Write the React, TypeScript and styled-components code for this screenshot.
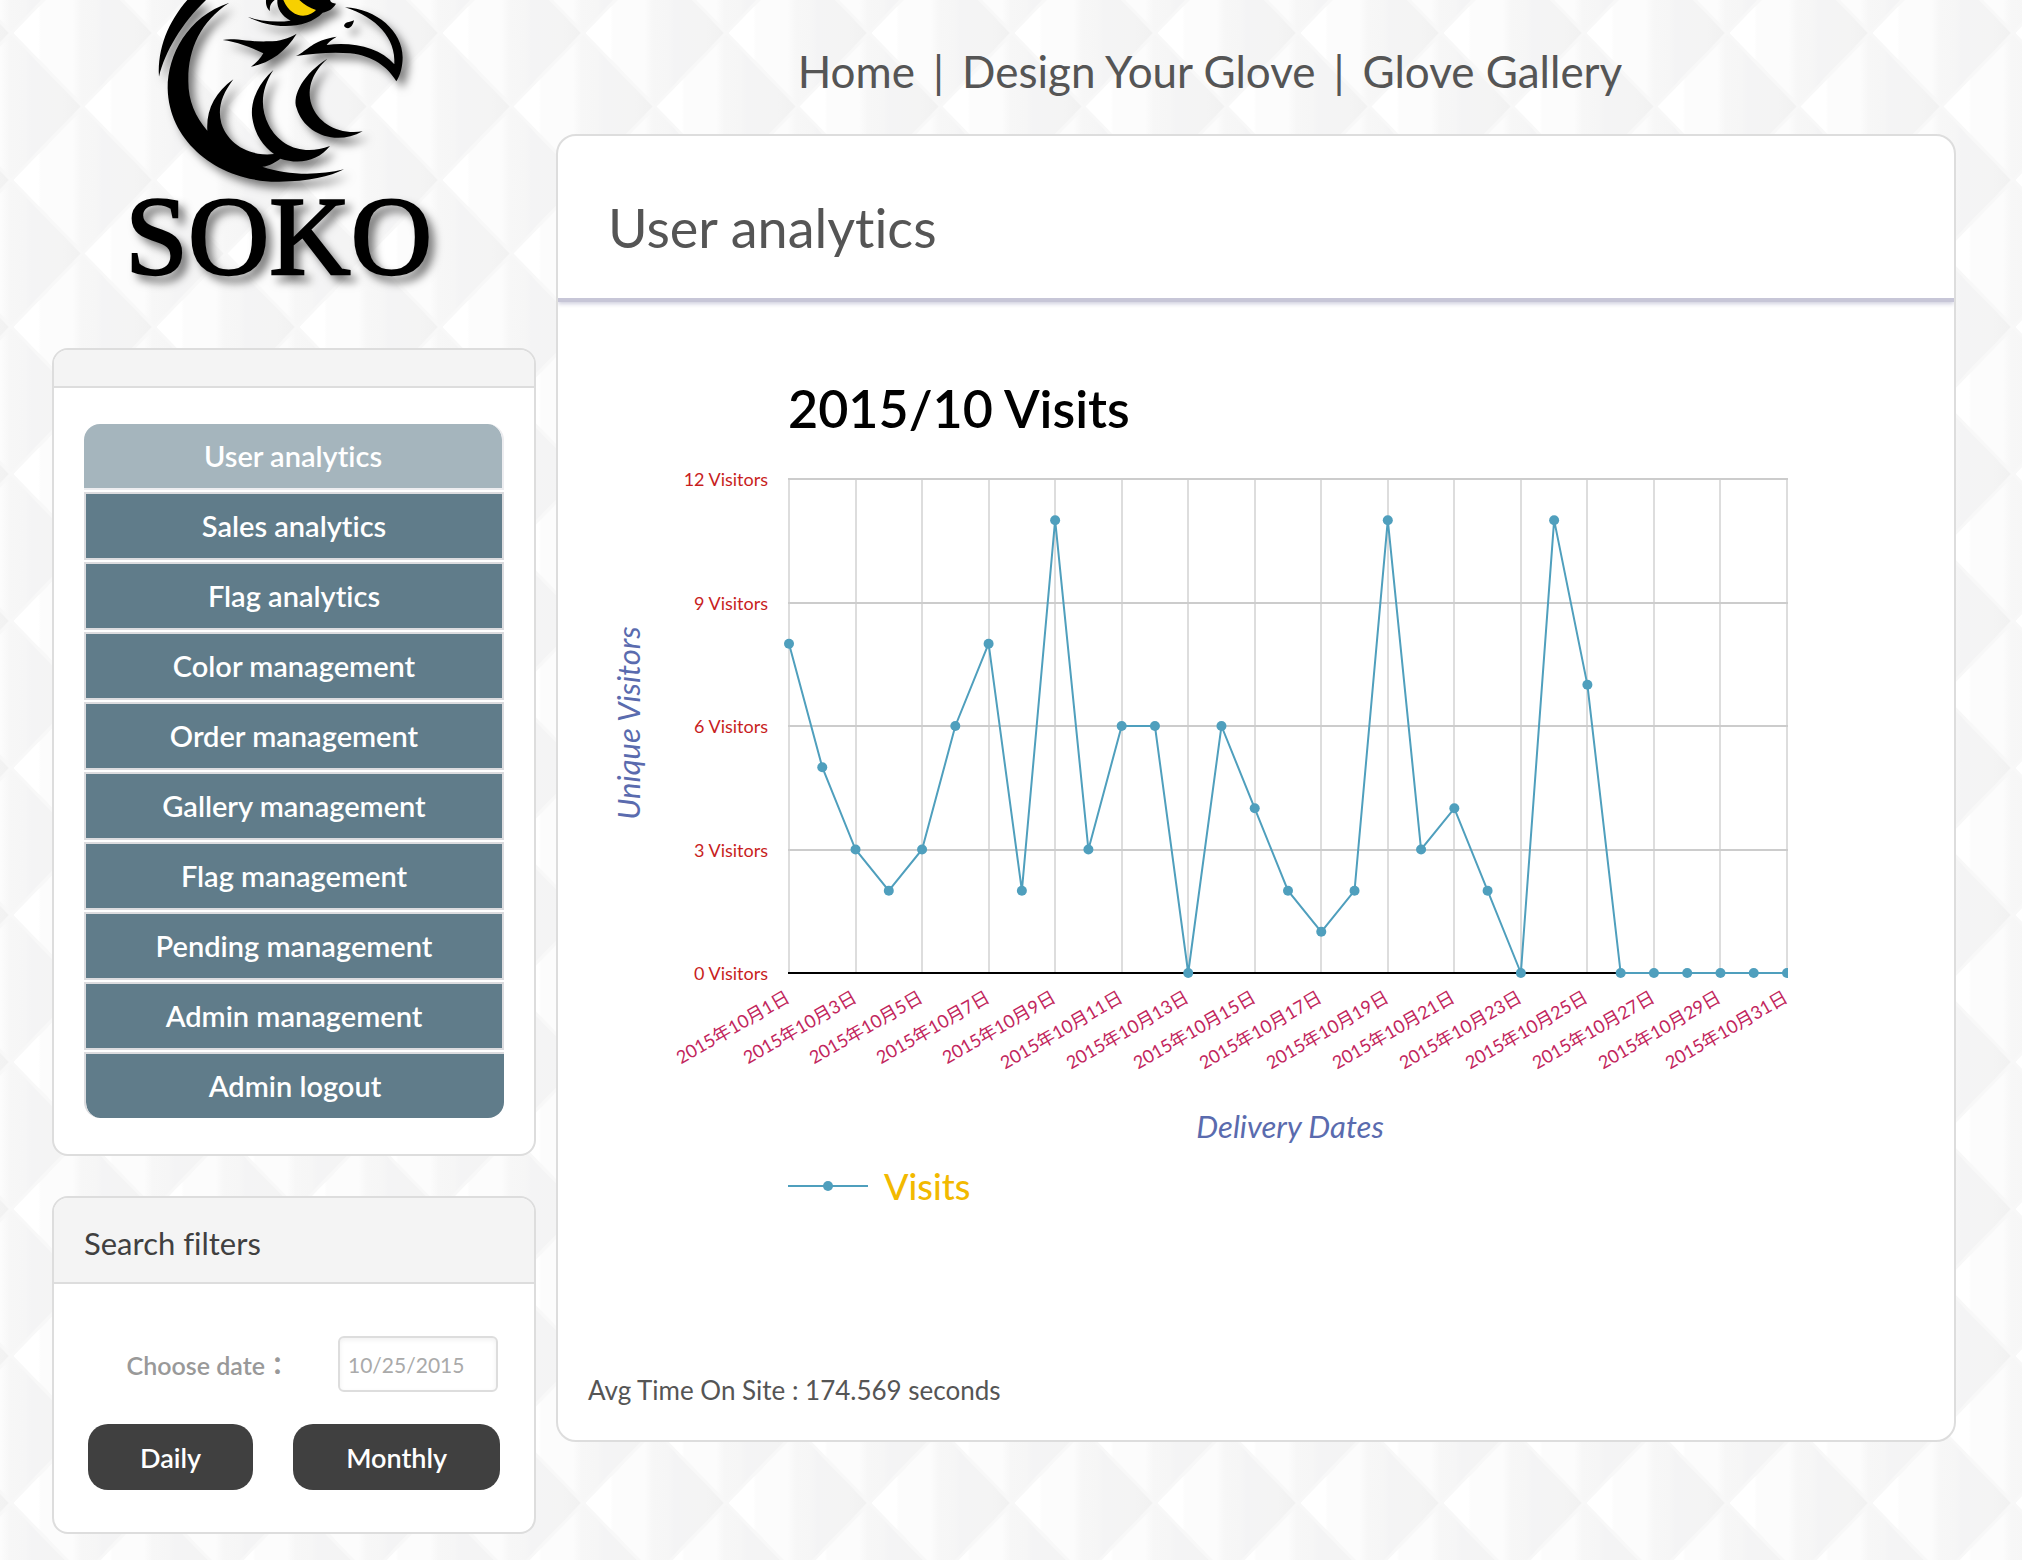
import React from "react";
import styled, { createGlobalStyle, css } from "styled-components";

const FONT = 'Lato, "Noto Sans CJK TC", sans-serif';
const LINE = "#dddddd";

const DIAMOND_TILE = encodeURIComponent(
  `<svg xmlns="http://www.w3.org/2000/svg" width="143" height="147" viewBox="0 0 143 147">
    <defs>
      <linearGradient id="g">
        <stop offset="0" stop-color="#ffffff"/>
        <stop offset=".19" stop-color="#ffffff"/>
        <stop offset=".21" stop-color="#fcfcfc"/>
        <stop offset=".43" stop-color="#fcfcfc"/>
        <stop offset=".49" stop-color="#f7f7f7"/>
        <stop offset=".6" stop-color="#f6f6f6"/>
        <stop offset=".64" stop-color="#f4f4f5"/>
        <stop offset=".86" stop-color="#f4f4f4"/>
        <stop offset="1" stop-color="#f1f1f1"/>
      </linearGradient>
    </defs>
    <g fill="url(#g)" stroke="#f8f8f8" stroke-width="3">
      <path d="M0 0L71.5-73.5L143 0L71.5 73.5Z"/>
      <path d="M0 147L71.5 73.5L143 147L71.5 220.5Z"/>
      <path d="M-71.5 73.5L0 0L71.5 73.5L0 147Z"/>
      <path d="M71.5 73.5L143 0L214.5 73.5L143 147Z"/>
    </g>
  </svg>`
);

const GlobalStyle = createGlobalStyle`
  *, *::before, *::after { box-sizing: border-box; }
  body {
    margin: 0;
    min-height: 100vh;
    background: #f8f8f8 url("data:image/svg+xml,${DIAMOND_TILE}") 11px 33px;
    font-family: ${FONT};
    font-variant-ligatures: none;
    color: #555555;
  }
`;

const Page = styled.div`
  display: grid;
  grid-template-columns: 484px minmax(0, 1fr);
  column-gap: 20px;
  align-items: start;
  padding: 0 66px 26px 52px;
`;

const Sidebar = styled.aside`
  display: flex;
  flex-direction: column;
  gap: 40px;
`;

const LogoLink = styled.a`
  display: block;
  height: 308px;
  padding-left: 48px;
`;

const LogoArt = styled.svg`
  display: block;
  width: 380px;
  height: 310px;
`;

const LogoWord = styled.text`
  font-family: "Liberation Serif", serif;
  font-size: 338px;
  stroke: #000000;
  stroke-width: 7px;
`;

const Card = styled.section<{ $radius: number }>`
  overflow: hidden;
  background: #ffffff;
  border: 2px solid ${LINE};
  border-radius: ${(p) => p.$radius}px;
`;

const CardHeader = styled.header<{ $height: number }>`
  display: flex;
  align-items: center;
  height: ${(p) => p.$height}px;
  padding: 6px 30px 0;
  background: #f4f4f4;
  border-bottom: 2px solid ${LINE};
`;

const CardTitle = styled.h2`
  margin: 0;
  font-size: 31px;
  font-weight: 400;
  color: #404040;
`;

const MenuList = styled.ul`
  display: flex;
  flex-direction: column;
  gap: 2px;
  margin: 0;
  padding: 36px 30px;
  list-style: none;
`;

const MenuLink = styled.a<{ $place?: "first" | "last" }>`
  display: flex;
  align-items: center;
  justify-content: center;
  height: 68px;
  padding-bottom: 2px;
  border: 2px solid #dcdcdf;
  background: #607c8a;
  background-clip: padding-box;
  color: #ffffff;
  font-size: 29px;
  font-weight: 600;
  text-decoration: none;

  ${(p) =>
    p.$place === "first" &&
    css`
      height: 66px;
      border-width: 0 2px 2px 0;
      border-color: #ededf0;
      border-radius: 16px 16px 0 0;
      background-color: #a5b5bd;
    `}
  ${(p) =>
    p.$place === "last" &&
    css`
      height: 66px;
      border-width: 2px 0 0 2px;
      border-radius: 0 0 16px 16px;
    `}
`;

const FilterForm = styled.form`
  display: flex;
  flex-direction: column;
  gap: 32px;
  padding: 52px 34px 42px;
`;

const DateRow = styled.div`
  display: flex;
  align-items: center;
  justify-content: flex-end;
  gap: 48px;
  padding-right: 2px;
`;

const DateLabel = styled.label`
  font-size: 25px;
  font-weight: 600;
  color: #999999;
`;

const DateInput = styled.input`
  width: 160px;
  height: 56px;
  padding: 0 8px;
  border: 2px solid ${LINE};
  border-radius: 6px;
  background: #ffffff;
  box-shadow: inset 0 2px 5px rgba(0, 0, 0, 0.06);
  font: 400 21px ${FONT};
  color: #aaaaaa;
`;

const ButtonRow = styled.div`
  display: flex;
  justify-content: space-between;
  gap: 40px;
`;

const FilterButton = styled.button<{ $grow: number }>`
  flex: ${(p) => p.$grow} 1 0;
  height: 66px;
  padding: 0;
  border: 0;
  border-radius: 20px;
  background: #404040;
  color: #ffffff;
  font: 600 27px ${FONT};
`;

const TopNav = styled.nav`
  display: flex;
  justify-content: center;
  gap: 18px;
  padding: 45px 92px 36px 0;
  font-size: 44px;
  line-height: 53px;
`;

const NavLink = styled.a`
  color: #555555;
  text-decoration: none;
  white-space: nowrap;
`;

const PageHeader = styled.header`
  display: flex;
  align-items: center;
  height: 166px;
  padding: 20px 50px 0;
  border-bottom: 4px solid #c7c6d7;
  box-shadow: 0 2px 4px rgba(150, 150, 185, 0.45);
`;

const PageTitle = styled.h1`
  margin: 0;
  font-size: 54px;
  font-weight: 400;
  color: #555555;
`;

const ChartArt = styled.svg`
  display: block;
  width: 100%;
  height: auto;
  margin-top: 4px;
`;

const ChartTitle = styled.text`
  font-size: 52px;
  font-weight: 600;
  fill: #000000;
`;

const ValueLabel = styled.text`
  font-size: 18px;
  text-anchor: end;
  fill: #c81e1e;
`;

const DateTick = styled.text`
  font-size: 18px;
  text-anchor: end;
  fill: #c2255c;
`;

const AxisTitle = styled.text`
  font-size: 31px;
  font-style: italic;
  text-anchor: middle;
  fill: #5a6bae;
`;

const LegendText = styled.text`
  font-size: 36px;
  font-weight: 500;
  fill: #f2b900;
`;

const Summary = styled.p`
  margin: 0;
  padding: 32px 30px 34px;
  font-size: 26px;
  line-height: 32px;
`;

const MENU = [
  "User analytics",
  "Sales analytics",
  "Flag analytics",
  "Color management",
  "Order management",
  "Gallery management",
  "Flag management",
  "Pending management",
  "Admin management",
  "Admin logout",
];

const VISITS = [
  8, 5, 3, 2, 3, 6, 8, 2, 11, 3, 6, 6, 0, 6, 4, 2, 1, 2, 11, 3, 4, 2, 0, 11, 7,
  0, 0, 0, 0, 0, 0,
];

const PLOT = { left: 231, right: 1229, top: 173, bottom: 667 };
const SERIES = "#4f9fbd";

const dayX = (day: number) =>
  PLOT.left + ((day - 1) * (PLOT.right - PLOT.left)) / 30;
const valueY = (value: number) =>
  PLOT.bottom - (value * (PLOT.bottom - PLOT.top)) / 12;

function VisitsChart() {
  const oddDays = VISITS.map((_, i) => i + 1).filter((d) => d % 2 === 1);
  return (
    <ChartArt viewBox="0 0 1396 1036" role="img" aria-label="Visits per day">
      <clipPath id="plot">
        <rect x={220} y={160} width={1010} height={520} />
      </clipPath>
      <ChartTitle x={230} y={122}>2015/10 Visits</ChartTitle>
      {oddDays.map((d) => (
        <rect key={d} x={Math.round(dayX(d)) - 1} y={PLOT.top} width={2} height={PLOT.bottom - PLOT.top} fill="#dddddd" />
      ))}
      {[3, 6, 9, 12].map((v) => (
        <rect key={v} x={230} y={Math.round(valueY(v)) - 1} width={1000} height={2} fill="#cccccc" />
      ))}
      <rect x={230} y={PLOT.bottom - 1} width={1000} height={2} fill="#000000" />
      <g clipPath="url(#plot)" fill={SERIES}>
        <polyline
          points={VISITS.map((v, i) => `${dayX(i + 1)},${valueY(v)}`).join(" ")}
          fill="none"
          stroke={SERIES}
          strokeWidth={2}
        />
        {VISITS.map((v, i) => (
          <circle key={i} cx={dayX(i + 1)} cy={valueY(v)} r={5} />
        ))}
      </g>
      {[0, 3, 6, 9, 12].map((v) => (
        <ValueLabel key={v} x={210} y={Math.round(valueY(v)) + 7}>{`${v} Visitors`}</ValueLabel>
      ))}
      {oddDays.map((d) => (
        <DateTick key={d} transform={`translate(${Math.round(dayX(d)) + 2} 695) rotate(-30)`}>
          {`2015年10月${d}日`}
        </DateTick>
      ))}
      <AxisTitle transform="translate(82 417) rotate(-90)">Unique Visitors</AxisTitle>
      <AxisTitle x={732} y={832}>Delivery Dates</AxisTitle>
      <rect x={230} y={879} width={80} height={2} fill={SERIES} />
      <circle cx={270} cy={880} r={5} fill={SERIES} />
      <LegendText x={326} y={894}>Visits</LegendText>
    </ChartArt>
  );
}

function Logo() {
  return (
    <LogoLink href="#" aria-label="SOKO">
      <LogoArt viewBox="0 0 1140 930">
        <defs>
          <filter id="shade" x="-10%" y="-10%" width="130%" height="130%">
            <feDropShadow dx="18" dy="20" stdDeviation="13" floodColor="#000000" floodOpacity="0.5" />
          </filter>
        </defs>
        <g filter="url(#shade)">
          <path d="M262 0C205 65 172 145 177 230C195 155 245 70 318 0Z" />
          <path d="M388 8C262 50 203 165 203 265C206 430 360 545 530 545C620 546 690 530 732 508C650 528 560 525 487 500C508 498 525 488 541 476C600 495 655 482 690 438C610 468 540 440 506 375C478 320 485 265 520 210C470 255 450 310 457 355C465 405 490 440 522 462C450 470 385 435 364 370C352 325 365 285 400 238C345 278 318 330 322 392C285 350 264 300 265 240C264 150 300 65 388 8Z" />
          <path d="M682 176C612 220 575 285 590 325C612 400 705 440 788 394C715 405 655 370 635 315C618 262 640 215 682 176Z" />
          <path d="M368 120C400 112 455 127 505 124C540 124 565 115 590 101C560 150 515 188 453 200C470 188 482 174 490 160C450 140 410 126 368 120Z" />
          <path d="M443 50C480 64 530 68 572 62C545 48 530 25 532 0L690 0C692 8 700 10 708 11C698 28 685 34 668 38C620 88 520 90 443 50Z" />
          <path d="M498 0L524 0C512 10 508 20 510 33C500 26 497 12 498 0Z" />
          <path d="M735 22C830 26 908 95 908 172C908 200 901 226 889 244C862 200 820 168 750 160C700 155 640 160 588 168C625 150 635 122 710 110C694 120 686 126 680 135C760 125 840 143 883 193C888 115 830 52 735 22Z" />
          <path d="M732 78C735 64 747 69 762 61C758 82 744 92 732 78Z" />
          <LogoWord x="76" y="821">SOKO</LogoWord>
        </g>
        <path d="M550 0L598 0C612 14 630 24 648 30C625 55 575 58 550 0Z" fill="#f7d000" />
      </LogoArt>
    </LogoLink>
  );
}

export default function App() {
  return (
    <>
      <GlobalStyle />
      <Page>
        <Sidebar>
          <Logo />
          <Card $radius={16}>
            <CardHeader $height={38} />
            <nav aria-label="Admin">
              <MenuList>
                {MENU.map((label, i) => (
                  <li key={label}>
                    <MenuLink
                      href="#"
                      $place={i === 0 ? "first" : i === MENU.length - 1 ? "last" : undefined}
                    >
                      {label}
                    </MenuLink>
                  </li>
                ))}
              </MenuList>
            </nav>
          </Card>
          <Card $radius={16}>
            <CardHeader $height={86}>
              <CardTitle>Search filters</CardTitle>
            </CardHeader>
            <FilterForm>
              <DateRow>
                <DateLabel htmlFor="date">Choose date：</DateLabel>
                <DateInput id="date" type="text" defaultValue="10/25/2015" />
              </DateRow>
              <ButtonRow>
                <FilterButton type="button" $grow={4}>Daily</FilterButton>
                <FilterButton type="button" $grow={5}>Monthly</FilterButton>
              </ButtonRow>
            </FilterForm>
          </Card>
        </Sidebar>
        <main>
          <TopNav aria-label="Site">
            <NavLink href="#">Home</NavLink>
            <span>|</span>
            <NavLink href="#">Design Your Glove</NavLink>
            <span>|</span>
            <NavLink href="#">Glove Gallery</NavLink>
          </TopNav>
          <Card $radius={20}>
            <PageHeader>
              <PageTitle>User analytics</PageTitle>
            </PageHeader>
            <VisitsChart />
            <Summary>Avg Time On Site : 174.569 seconds</Summary>
          </Card>
        </main>
      </Page>
    </>
  );
}
